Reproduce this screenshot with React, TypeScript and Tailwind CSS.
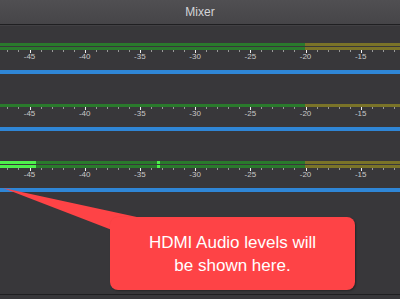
import React from 'react';

const PX_PER_DB = 11.04;
const ZERO_X = 29.5; // x of -45 dB

function dbToX(db: number): number {
  return ZERO_X + (db + 45) * PX_PER_DB;
}

function Scale() {
  const ticks: number[] = [];
  for (let d = -47; d <= -12; d++) ticks.push(d);
  return (
    <svg width={400} height={10} className="block">
      {ticks.map((d) => {
        const x = Math.round(dbToX(d)) + 0.5;
        const major = d % 5 === 0;
        return (
          <line
            key={d}
            x1={x}
            x2={x}
            y1={0}
            y2={major ? 3 : 2}
            stroke={major ? '#f0f0f0' : '#9a9a9a'}
            strokeWidth={1}
          />
        );
      })}
      {[-45, -40, -35, -30, -25, -20, -15].map((d) => (
        <text
          key={d}
          x={dbToX(d)}
          y={9}
          textAnchor="middle"
          fill="#c8c8c8"
          fontSize={8}
          fontFamily="Liberation Sans, Arial, sans-serif"
        >
          {d}
        </text>
      ))}
    </svg>
  );
}

function Bar({ level = 0, peak }: { level?: number; peak?: number }) {
  return (
    <div className="relative flex h-[3px] w-full">
      <div className="h-full w-[305px] bg-[#2a7a2c]" />
      <div className="h-full flex-1 bg-[#7a7328]" />
      {level > 0 && (
        <div className="absolute left-0 top-0 h-full bg-[#4ef04c]" style={{ width: level }} />
      )}
      {peak !== undefined && (
        <div className="absolute top-0 h-full w-[3px] bg-[#4ef04c]" style={{ left: peak }} />
      )}
    </div>
  );
}

function Meter({
  stereo,
  level,
  peak,
}: {
  stereo: boolean;
  level?: number;
  peak?: number;
}) {
  return (
    <div className="flex flex-col">
      <div className="flex flex-col gap-[1px]">
        <Bar level={level} peak={peak} />
        {stereo && <Bar level={level} peak={peak} />}
      </div>
      <Scale />
    </div>
  );
}

export default function App() {
  return (
    <div
      className="relative h-[299px] w-[400px] overflow-hidden bg-[#38373a]"
      style={{ fontFamily: '"Liberation Sans", Arial, sans-serif' }}
    >
      {/* Title bar */}
      <div className="flex h-[25px] items-center justify-center border-b border-[#1f1f21] bg-gradient-to-b from-[#504f52] to-[#464548]">
        <span className="text-[12px] text-[#d4d4d8]">Mixer</span>
      </div>
      <div className="h-[1px] bg-[#414043]" />

      {/* Channels */}
      <div className="flex flex-col">
        <div className="mt-[17px]">
          <Meter stereo />
        </div>
        <div className="mt-[10px] h-[4px] bg-[#2f86d6]" />

        <div className="mt-[30px]">
          <Meter stereo={false} />
        </div>
        <div className="mt-[10px] h-[4px] bg-[#2f86d6]" />

        <div className="mt-[30px]">
          <Meter stereo level={36} peak={157} />
        </div>
        <div className="mt-[10px] h-[4px] bg-[#2f86d6]" />
      </div>

      <div className="absolute bottom-[4px] left-0 right-0 h-[1px] bg-[#1f1f21]" />

      {/* Callout pointer */}
      <svg className="absolute left-0 top-0" width={400} height={299}>
        <polygon points="3,188 146,219 112,230" fill="#fe4346" />
      </svg>

      {/* Callout */}
      <div className="absolute left-[110px] top-[217px] flex h-[73px] w-[245px] items-center justify-center rounded-[8px] bg-[#fe4346] shadow-[1px_1px_2px_rgba(0,0,0,0.35)]">
        <p className="text-center text-[17px] leading-[23px] text-white">
          HDMI Audio levels will
          <br />
          be shown here.
        </p>
      </div>
    </div>
  );
}
